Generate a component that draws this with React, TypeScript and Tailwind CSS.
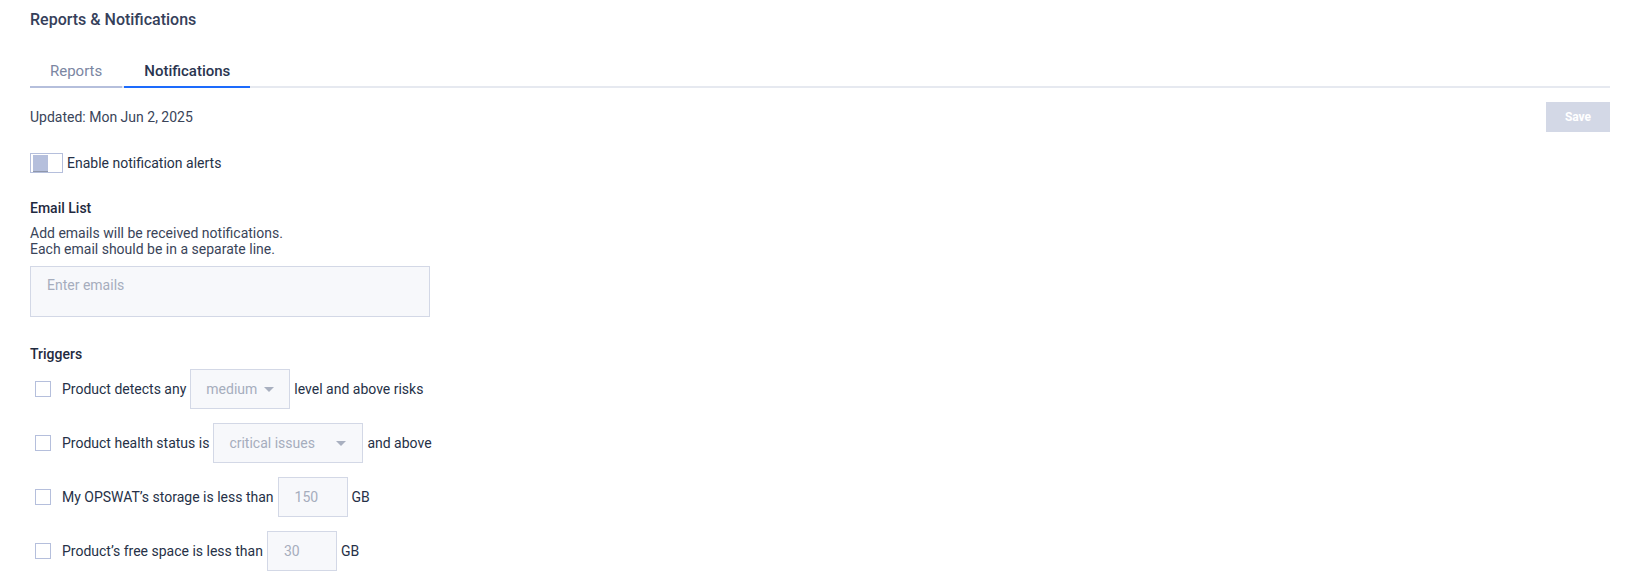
import React, { useState } from "react";

function Caret() {
  return (
    <svg width="10" height="5" viewBox="0 0 10 5" className="shrink-0">
      <path d="M0 0 L10 0 L5 5 Z" fill="#a9b0c0" />
    </svg>
  );
}

function Checkbox() {
  return (
    <span className="ml-[5px] mr-[11px] inline-block h-4 w-4 shrink-0 border border-[#b5bfdc] bg-white" />
  );
}

export default function App() {
  const [tab, setTab] = useState("Notifications");
  const tabs = ["Reports", "Notifications"];

  return (
    <div
      className="min-h-screen bg-white pl-[30px] pr-[40px] pt-[10px] text-[14px] text-[#263147]"
      style={{ fontFamily: "Roboto, 'Liberation Sans', sans-serif" }}
    >
      {/* Header */}
      <h1 className="text-[16px] font-medium leading-[20px] text-[#35405a]">
        Reports &amp; Notifications
      </h1>

      {/* Tabs */}
      <div className="mt-[26px] flex border-b-2 border-[#e6e9f0]">
        {tabs.map((label) => (
          <button
            key={label}
            onClick={() => setTab(label)}
            className={`-mb-[2px] mr-[2px] h-[32px] border-b-2 px-[20px] text-[15px] leading-[20px] ${
              tab === label
                ? "border-[#1d6bfc] font-medium text-[#2a3550]"
                : "border-[#b5bfdc] text-[#7b86a2]"
            }`}
          >
            {label}
          </button>
        ))}
      </div>

      {/* Updated row */}
      <div className="mt-[14px] flex items-center justify-between">
        <span className="leading-[20px] text-[#3a4459]">Updated: Mon Jun 2, 2025</span>
        <button className="h-[30px] w-[64px] bg-[#d3d8e6] text-[12px] font-bold text-white">
          Save
        </button>
      </div>

      {/* Toggle */}
      <div className="mt-[21px] flex items-center">
        <span className="relative inline-block h-[20px] w-[33px] border border-[#b5bfdc] bg-white">
          <span className="absolute left-[2px] top-[1px] h-[16px] w-[15px] bg-[#b5bfdc] shadow-[0_1px_0_#8f97ab]" />
        </span>
        <span className="ml-[4px] leading-[20px]">Enable notification alerts</span>
      </div>

      {/* Email list */}
      <div className="mt-[25px] font-medium leading-[20px] text-[#1f2a40]">Email List</div>
      <div className="mt-[7px] text-[14px] leading-[16px] text-[#3a4459]">
        <div>Add emails will be received notifications.</div>
        <div>Each email should be in a separate line.</div>
      </div>
      <textarea
        placeholder="Enter emails"
        className="mt-[9px] block h-[51px] w-[400px] resize-none border border-[#d3d8e6] bg-[#f7f8fb] px-[16px] py-[8px] text-[14px] leading-[20px] outline-none placeholder:text-[#a6adbd]"
      />

      {/* Triggers */}
      <div className="mt-[27px] font-medium leading-[20px] text-[#1f2a40]">Triggers</div>
      <div className="mt-[5px] flex flex-col gap-[14px]">
        <div className="flex h-[40px] items-center">
          <Checkbox />
          <span>Product detects any</span>
          <div className="mx-[4px] flex h-[40px] w-[100px] items-center justify-between border border-[#d3d8e6] bg-[#f7f8fb] pl-[15px] pr-[15px] text-[#a6adbd]">
            <span>medium</span>
            <Caret />
          </div>
          <span>level and above risks</span>
        </div>

        <div className="flex h-[40px] items-center">
          <Checkbox />
          <span>Product health status is</span>
          <div className="mx-[4px] flex h-[40px] w-[150px] items-center justify-between border border-[#d3d8e6] bg-[#f7f8fb] pl-[15px] pr-[16px] text-[#a6adbd]">
            <span>critical issues</span>
            <Caret />
          </div>
          <span>and above</span>
        </div>

        <div className="flex h-[40px] items-center">
          <Checkbox />
          <span>My OPSWAT’s storage is less than</span>
          <div className="mx-[4px] flex h-[40px] w-[70px] items-center border border-[#d3d8e6] bg-[#f7f8fb] pl-[16px] text-[#a6adbd]">
            150
          </div>
          <span>GB</span>
        </div>

        <div className="flex h-[40px] items-center">
          <Checkbox />
          <span>Product’s free space is less than</span>
          <div className="mx-[4px] flex h-[40px] w-[70px] items-center border border-[#d3d8e6] bg-[#f7f8fb] pl-[16px] text-[#a6adbd]">
            30
          </div>
          <span>GB</span>
        </div>
      </div>
    </div>
  );
}
